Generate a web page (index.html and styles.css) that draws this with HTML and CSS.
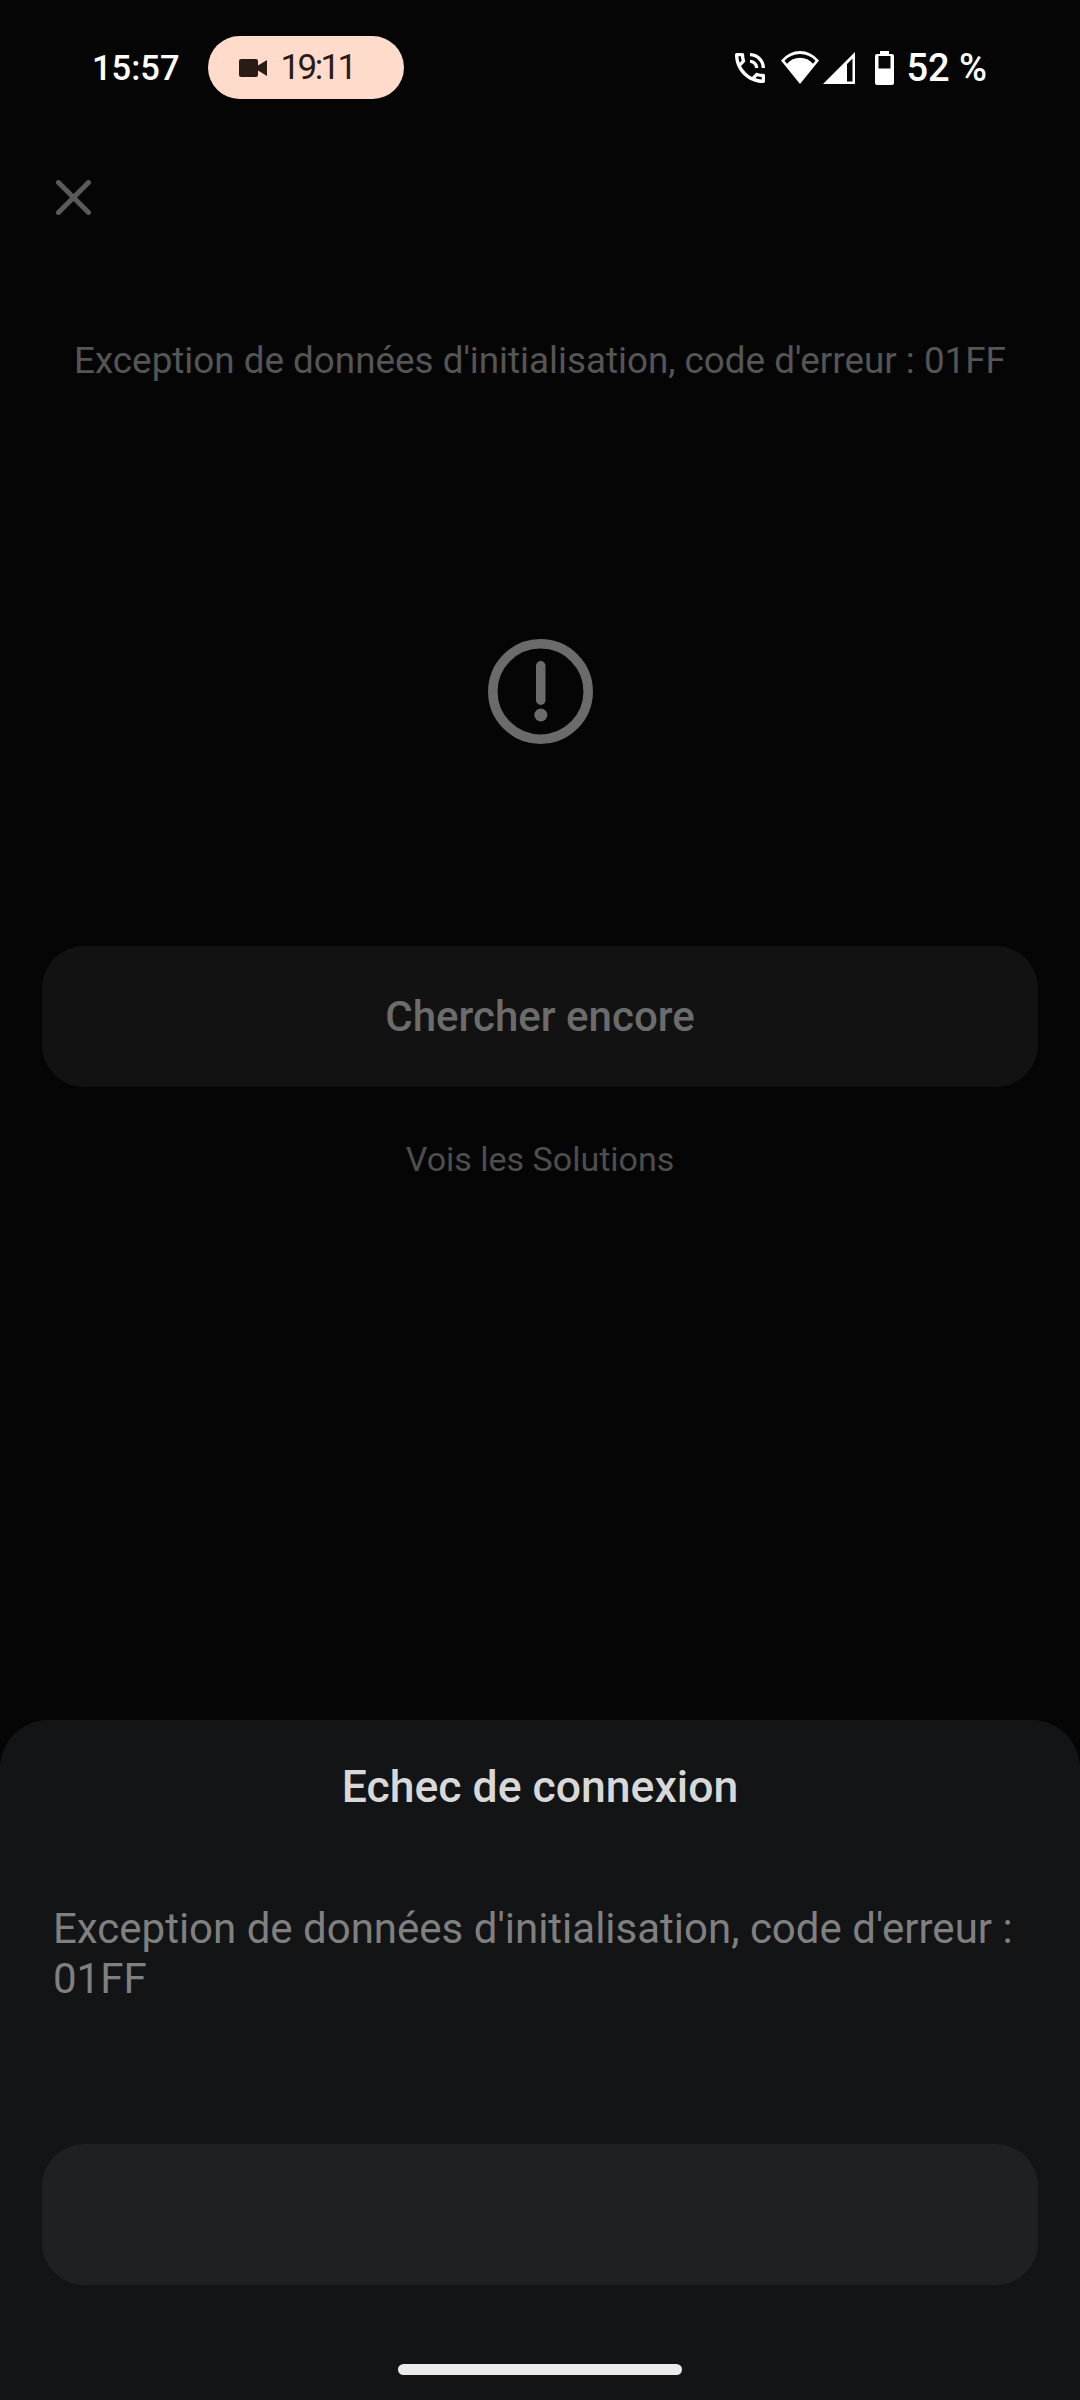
FILE: index.html
```html
<!DOCTYPE html>
<html lang="fr">
<head>
<meta charset="utf-8">
<title>Echec de connexion</title>
<link rel="stylesheet" href="styles.css">
</head>
<body>
<div class="page">
  <header class="status">
    <div class="status-left">
      <span class="clock">15:57</span>
      <div class="pill">
        <svg class="cam" viewBox="0 0 28 18"><path d="M2 0h15a2 2 0 0 1 2 2v4.500l9-5.500v16l-9-5.500V16a2 2 0 0 1-2 2H2a2 2 0 0 1-2-2V2a2 2 0 0 1 2-2z"/></svg>
        <span class="pill-time">19:11</span>
      </div>
    </div>
    <div class="status-right">
      <svg class="i-phone" viewBox="3 3 18 18"><path d="M15 12h2c0-2.760-2.240-5-5-5v2c1.660 0 3 1.340 3 3zm4 0h2c0-4.970-4.030-9-9-9v2c3.870 0 7 3.130 7 7zm1 3.500c-1.250 0-2.450-.2-3.570-.57-.1-.03-.21-.05-.31-.05-.26 0-.51.1-.71.29l-2.200 2.200c-2.830-1.450-5.150-3.760-6.590-6.590l2.200-2.210c.28-.26.36-.65.25-1C8.700 6.450 8.500 5.250 8.500 4c0-.55-.45-1-1-1H4c-.55 0-1 .45-1 1 0 9.390 7.610 17 17 17 .55 0 1-.45 1-1v-3.500c0-.55-.45-1-1-1zM5.030 5h1.500c.07.88.22 1.750.45 2.580l-1.200 1.210c-.4-1.210-.66-2.470-.75-3.790zM19 18.970c-1.320-.09-2.600-.35-3.800-.76l1.200-1.200c.85.24 1.720.39 2.600.45v1.510z"/></svg>
      <svg class="i-wifi" viewBox="0 0 38 33"><path fill-rule="evenodd" d="M19 33 0 9.500Q8 0 19 0t19 9.500zM3.500 9.700 6 12.800Q11 6.800 19 6.800t13 6L34.500 9.700Q28 3 19 3T3.500 9.700z"/></svg>
      <svg class="i-signal" viewBox="0 0 32 32"><path fill-rule="evenodd" d="M32 0v32H0zM24 29.500h5.500V6.500L24 12z"/></svg>
      <svg class="i-batt" viewBox="0 0 19 34"><path fill-rule="evenodd" d="M5 0h9v3h3a2 2 0 0 1 2 2v27a2 2 0 0 1-2 2H2a2 2 0 0 1-2-2V5a2 2 0 0 1 2-2h3zM3.500 5v12.500h12V5z"/></svg>
      <span class="pct">52 %</span>
    </div>
  </header>

  <main class="content">
    <div class="close-row">
      <svg class="i-close" viewBox="0 0 35 35"><path d="M2.500 2.500l30 30M32.500 2.500l-30 30"/></svg>
    </div>
    <p class="err">Exception de données d'initialisation, code d'erreur : 01FF</p>
    <svg class="i-alert" viewBox="0 0 105 105"><circle class="ring" cx="52.500" cy="52.500" r="47.700"/><rect class="mark" x="48" y="22" width="9.500" height="44" rx="4.750"/><circle class="mark" cx="52.800" cy="76" r="6.500"/></svg>
    <button class="retry" type="button">Chercher encore</button>
    <a class="solutions">Vois les Solutions</a>
  </main>

  <section class="sheet">
    <h1 class="sheet-title">Echec de connexion</h1>
    <p class="sheet-body">Exception de données d'initialisation, code d'erreur : 01FF</p>
    <div class="sheet-btn"></div>
    <div class="home"></div>
  </section>
</div>
</body>
</html>
```

FILE: styles.css
```css
* { box-sizing: border-box; }
html, body { margin: 0; padding: 0; background: #050505; }
body { font-family: Roboto, "Liberation Sans", sans-serif; }
.page { width: 1080px; height: 2400px; display: flex; flex-direction: column; overflow: hidden; }

.status { height: 99px; padding: 36px 93px 0 92px; display: flex; justify-content: space-between; align-items: center; color: #fff; }
.status-left { display: flex; align-items: center; gap: 28px; height: 63px; }
.clock { font-size: 34.500px; font-weight: 500; }
.pill { width: 196px; height: 63px; border-radius: 32px; background: #ffdbcc; color: #2b1b16; display: flex; align-items: center; padding-left: 31px; gap: 14px; }
.cam { width: 28px; height: 18px; fill: #2b1b16; }
.pill-time { font-size: 35px; letter-spacing: -2.600px; }
.status-right { display: flex; align-items: center; height: 63px; }
.status-right svg { fill: #fff; display: block; }
.i-phone { width: 30px; height: 30px; margin-right: 16px; }
.i-wifi { width: 38px; height: 33px; margin-right: 4px; }
.i-signal { width: 32px; height: 32px; margin-right: 20px; }
.i-batt { width: 19px; height: 34px; margin-right: 12px; }
.pct { font-size: 38px; font-weight: 500; }

.content { display: flex; flex-direction: column; align-items: center; }
.close-row { align-self: stretch; padding: 81px 0 0 56px; display: flex; }
.i-close { width: 35px; height: 35px; fill: none; stroke: #5a5a5a; stroke-width: 5; stroke-linecap: round; }
.err { margin: 116px 0 0; font-size: 36.800px; line-height: 60px; color: #555; white-space: nowrap; }
.i-alert { width: 105px; height: 105px; margin-top: 248px; display: block; }
.ring { fill: none; stroke: #6b6b6b; stroke-width: 9.500; }
.mark { fill: #6b6b6b; }
.retry { margin-top: 202px; width: 996px; height: 141px; border: 0; border-radius: 42px; background: #121212; color: #6c6c6c; font: 500 42px Roboto, sans-serif; padding: 0; }
.solutions { margin-top: 50px; font-size: 34px; line-height: 44px; color: #4e4e4e; }

.sheet { margin-top: auto; height: 680px; background: #131416; border-radius: 48px 48px 0 0; display: flex; flex-direction: column; align-items: center; }
.sheet-title { margin: 40px 0 0; font-size: 44.500px; font-weight: 500; line-height: 54px; color: #d8d8d8; }
.sheet-body { margin: 90px 0 0; align-self: stretch; padding: 0 53px; font-size: 42px; line-height: 50px; color: #808080; }
.sheet-btn { margin-top: 140px; width: 996px; height: 141px; border-radius: 42px; background: #1f2022; flex: none; }
.home { margin-top: 79px; width: 284px; height: 11px; border-radius: 6px; background: #ebebeb; flex: none; }
```
